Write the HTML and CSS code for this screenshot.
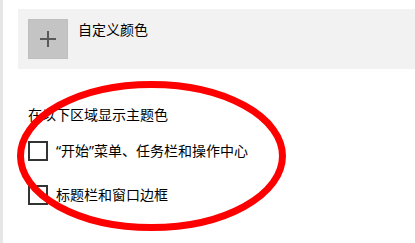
FILE: index.html
```html
<!DOCTYPE html>
<html lang="zh-CN">
<head>
<meta charset="utf-8">
<title>颜色</title>
<link rel="stylesheet" href="styles.css">
</head>
<body>
<div class="page">
  <div class="strip"></div>
  <div class="main">
    <div class="panel">
      <div class="add-btn">
        <svg width="16" height="16" viewBox="0 0 16 16"><path d="M0 8H16M8 0V16" stroke="#595959" stroke-width="2" fill="none"/></svg>
      </div>
      <div class="panel-label">自定义颜色</div>
    </div>
    <div class="section">
      <div class="heading">在以下区域显示主题色</div>
      <div class="option">
        <span class="box"></span>
        <span class="opt-label">“开始”菜单、任务栏和操作中心</span>
      </div>
      <div class="option">
        <span class="box"></span>
        <span class="opt-label">标题栏和窗口边框</span>
      </div>
    </div>
  </div>
  <svg class="ring" width="415" height="243" viewBox="0 0 415 243">
    <ellipse cx="151.5" cy="156" rx="131" ry="71.5" fill="none" stroke="#ff0000" stroke-width="7"/>
  </svg>
</div>
</body>
</html>
```

FILE: styles.css
```css
html, body {
  margin: 0;
  padding: 0;
  background: #ffffff;
}
body {
  font-family: "Noto Sans", "Noto Sans CJK SC", sans-serif;
  font-size: 14px;
  color: #000000;
}
.page {
  position: relative;
  display: flex;
  width: 415px;
  height: 243px;
  overflow: hidden;
}
.strip {
  width: 3px;
  flex: none;
  background: #e6e6e6;
}
.main {
  flex: 1;
  padding-left: 15px;
}
.panel {
  margin-top: 9px;
  height: 60px;
  box-sizing: border-box;
  background: #f2f2f2;
  padding: 10px;
  display: flex;
  align-items: flex-start;
  gap: 10px;
}
.add-btn {
  width: 40px;
  height: 40px;
  box-sizing: border-box;
  background: #c4c4c4;
  border: 1px solid #bfbfbf;
  display: flex;
  align-items: center;
  justify-content: center;
}
.panel-label {
  line-height: 20px;
  margin-top: 1px;
}
.section {
  padding-left: 10px;
}
.heading {
  margin-top: 36px;
  line-height: 20px;
}
.option {
  display: flex;
  align-items: center;
  gap: 8px;
  height: 20px;
  margin-top: 16px;
}
.option + .option {
  margin-top: 24px;
}
.box {
  width: 20px;
  height: 20px;
  box-sizing: border-box;
  border: 2px solid #333333;
  flex: none;
}
.opt-label {
  line-height: 20px;
}
.ring {
  position: absolute;
  left: 0;
  top: 0;
  pointer-events: none;
}
```
